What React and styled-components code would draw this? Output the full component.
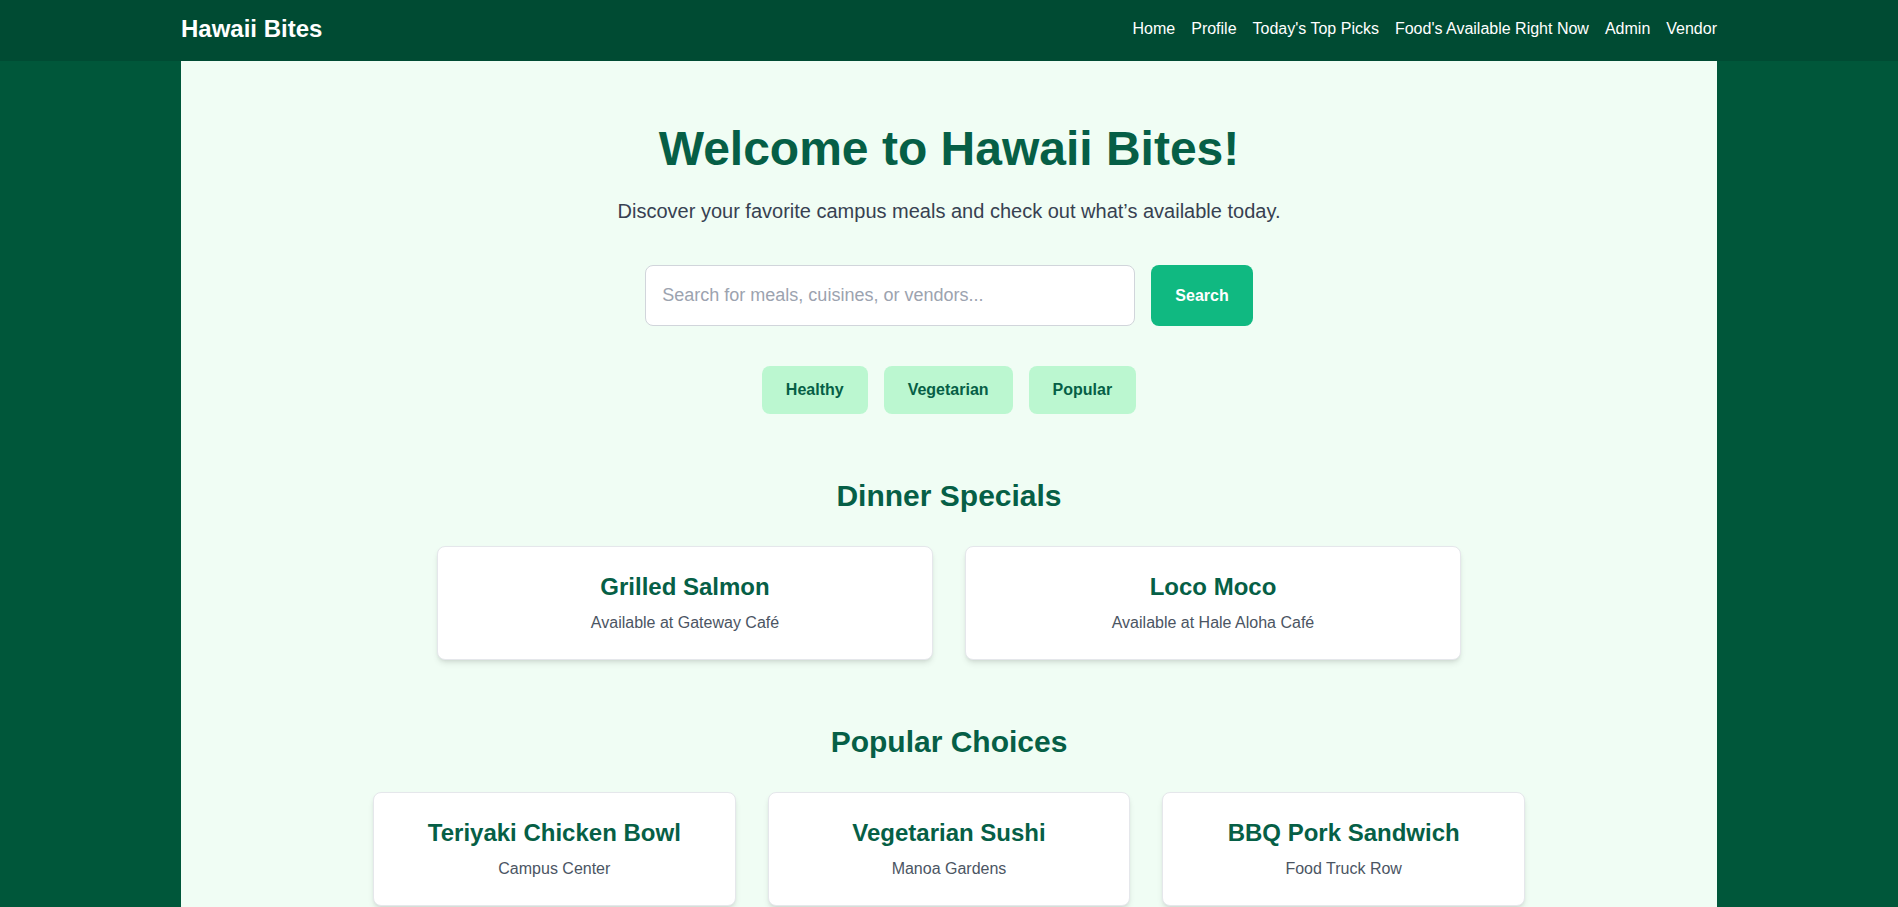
import React from "react";
import styled, { createGlobalStyle } from "styled-components";

const GlobalStyle = createGlobalStyle`
  * { box-sizing: border-box; }
  html, body {
    margin: 0;
    padding: 0;
    background: #00573a;
    font-family: "Liberation Sans", Arial, Helvetica, sans-serif;
  }
`;

const NavBar = styled.nav`
  background: #004b33;
`;

const NavInner = styled.div`
  max-width: 1536px;
  margin: 0 auto;
  height: 61px;
  padding-bottom: 4px;
  display: flex;
  align-items: center;
  justify-content: space-between;
`;

const Logo = styled.a`
  color: #ffffff;
  font-size: 24px;
  line-height: 32px;
  font-weight: 700;
  text-decoration: none;
`;

const NavLinks = styled.div`
  display: flex;
  align-items: center;
  gap: 16px;
`;

const NavLink = styled.a`
  color: #ffffff;
  font-size: 16px;
  line-height: 24px;
  text-decoration: none;
`;

const Main = styled.main`
  max-width: 1536px;
  margin: 0 auto;
  background: #f0fdf4;
  padding: 64px 0 48px;
`;

const Hero = styled.section`
  text-align: center;
  margin-bottom: 64px;
`;

const Title = styled.h1`
  margin: 0 0 24px;
  font-size: 48px;
  line-height: 48px;
  font-weight: 700;
  color: #065f46;
`;

const Lead = styled.p`
  margin: 0 0 40px;
  font-size: 20px;
  line-height: 28px;
  color: #374151;
`;

const SearchForm = styled.form`
  display: flex;
  justify-content: center;
  gap: 16px;
  margin-bottom: 40px;
`;

const SearchInput = styled.input`
  width: 490px;
  height: 61px;
  padding: 0 16px;
  font-family: inherit;
  font-size: 18px;
  color: #111827;
  background: #ffffff;
  border: 1px solid #d1d5db;
  border-radius: 8px;
  outline: none;
  &::placeholder { color: #9ca3af; }
`;

const PrimaryButton = styled.button`
  height: 61px;
  padding: 0 24px;
  font-family: inherit;
  font-size: 16px;
  font-weight: 700;
  color: #ffffff;
  background: #10b981;
  border: none;
  border-radius: 8px;
  cursor: pointer;
`;

const Tags = styled.div`
  display: flex;
  justify-content: center;
  gap: 16px;
`;

const TagButton = styled.button`
  padding: 12px 24px;
  font-family: inherit;
  font-size: 16px;
  line-height: 24px;
  font-weight: 700;
  color: #065f46;
  background: #bbf7d0;
  border: none;
  border-radius: 8px;
  cursor: pointer;
`;

const Section = styled.section`
  margin-bottom: 64px;
  text-align: center;
`;

const SectionTitle = styled.h2`
  margin: 0 0 32px;
  font-size: 30px;
  line-height: 36px;
  font-weight: 700;
  color: #065f46;
`;

const CardGrid = styled.div`
  display: grid;
  grid-template-columns: repeat(${(p) => p.$cols}, 1fr);
  gap: 32px;
  max-width: ${(p) => p.$max}px;
  margin: 0 auto;
`;

const Card = styled.div`
  background: #ffffff;
  border: 1px solid #e5e7eb;
  border-radius: 8px;
  box-shadow: 0 4px 6px -1px rgba(0, 0, 0, 0.1), 0 2px 4px -2px rgba(0, 0, 0, 0.1);
  padding: 24px;
  text-align: center;
`;

const CardTitle = styled.h3`
  margin: 0 0 8px;
  font-size: 24px;
  line-height: 32px;
  font-weight: 700;
  color: #065f46;
`;

const CardText = styled.p`
  margin: 0;
  font-size: 16px;
  line-height: 24px;
  color: #4b5563;
`;

const links = [
  "Home",
  "Profile",
  "Today's Top Picks",
  "Food's Available Right Now",
  "Admin",
  "Vendor",
];

const dinner = [
  { name: "Grilled Salmon", where: "Available at Gateway Café" },
  { name: "Loco Moco", where: "Available at Hale Aloha Café" },
];

const popular = [
  { name: "Teriyaki Chicken Bowl", where: "Campus Center" },
  { name: "Vegetarian Sushi", where: "Manoa Gardens" },
  { name: "BBQ Pork Sandwich", where: "Food Truck Row" },
];

function FoodSection({ title, items, cols, max }) {
  return (
    <Section>
      <SectionTitle>{title}</SectionTitle>
      <CardGrid $cols={cols} $max={max}>
        {items.map((it) => (
          <Card key={it.name}>
            <CardTitle>{it.name}</CardTitle>
            <CardText>{it.where}</CardText>
          </Card>
        ))}
      </CardGrid>
    </Section>
  );
}

export default function App() {
  return (
    <>
      <GlobalStyle />
      <NavBar>
        <NavInner>
          <Logo href="#">Hawaii Bites</Logo>
          <NavLinks>
            {links.map((l) => (
              <NavLink key={l} href="#">
                {l}
              </NavLink>
            ))}
          </NavLinks>
        </NavInner>
      </NavBar>
      <Main>
        <Hero>
          <Title>Welcome to Hawaii Bites!</Title>
          <Lead>Discover your favorite campus meals and check out what’s available today.</Lead>
          <SearchForm onSubmit={(e) => e.preventDefault()}>
            <SearchInput type="text" placeholder="Search for meals, cuisines, or vendors..." />
            <PrimaryButton type="submit">Search</PrimaryButton>
          </SearchForm>
          <Tags>
            <TagButton type="button">Healthy</TagButton>
            <TagButton type="button">Vegetarian</TagButton>
            <TagButton type="button">Popular</TagButton>
          </Tags>
        </Hero>
        <FoodSection title="Dinner Specials" items={dinner} cols={2} max={1024} />
        <FoodSection title="Popular Choices" items={popular} cols={3} max={1152} />
      </Main>
    </>
  );
}
